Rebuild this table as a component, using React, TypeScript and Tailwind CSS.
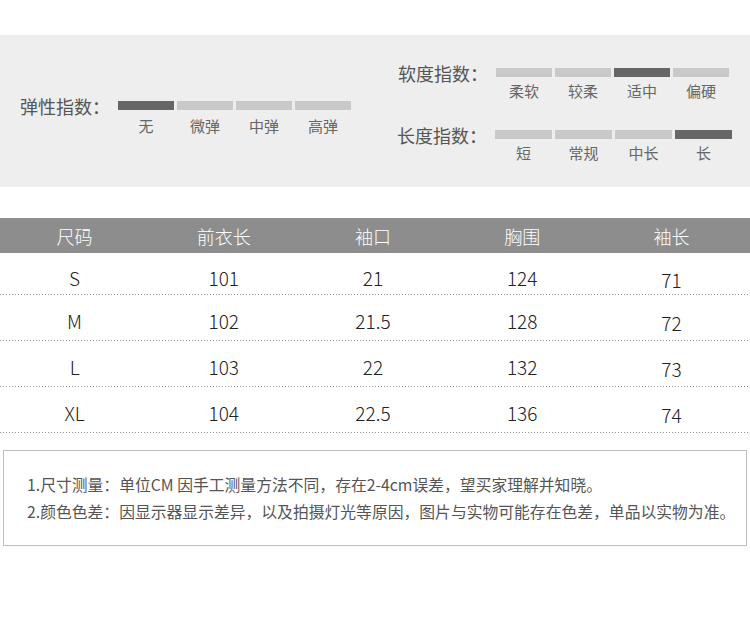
import React from "react";

const FONT = "font-['Noto_Sans_CJK_SC','Noto_Sans',sans-serif]";

interface IndexRowProps {
  title: string;
  labels: string[];
  active: number;
  barClass: string;
  labelGap: string;
}

const IndexRow: React.FC<IndexRowProps> = ({ title, labels, active, barClass, labelGap }) => (
  <div className="flex flex-col">
    <div className="flex h-[9px] items-center">
      <span className="w-[98px] shrink-0 text-[18px] leading-none text-[#555]">{title}</span>
      <div className="flex gap-[3px]">
        {labels.map((l, i) => (
          <div key={l} className={`${barClass} h-[9px] ${i === active ? "bg-[#666]" : "bg-[#c9c9c9]"}`} />
        ))}
      </div>
    </div>
    <div className={`ml-[98px] flex gap-[3px] ${labelGap}`}>
      {labels.map((l) => (
        <span key={l} className={`${barClass} text-center text-[15px] leading-[20px] text-[#666]`}>
          {l}
        </span>
      ))}
    </div>
  </div>
);

const header = ["尺码", "前衣长", "袖口", "胸围", "袖长"];
const rows = [
  ["S", "101", "21", "124", "71"],
  ["M", "102", "21.5", "128", "72"],
  ["L", "103", "22", "132", "73"],
  ["XL", "104", "22.5", "136", "74"],
];

const Dots = () => (
  <div className="h-px w-full bg-[linear-gradient(to_right,#8f8f8f_34%,transparent_34%)] bg-[length:3px_1px]" />
);

export default function App() {
  return (
    <div className={`${FONT} h-[622px] w-[750px] overflow-hidden bg-white`}>
      {/* Index panel */}
      <div className="mt-[35px] flex h-[152px] bg-[#eeeeee]">
        <div className="pl-[20px] pt-[66px]">
          <IndexRow
            title="弹性指数："
            labels={["无", "微弹", "中弹", "高弹"]}
            active={0}
            barClass="w-[56px]"
            labelGap="mt-[6px]"
          />
        </div>
        <div className="ml-[47px] flex flex-col gap-[29px] pt-[33px]">
          <IndexRow
            title="软度指数："
            labels={["柔软", "较柔", "适中", "偏硬"]}
            active={2}
            barClass="w-[56px]"
            labelGap="mt-[4px]"
          />
          <div className="-ml-px">
            <IndexRow
              title="长度指数："
              labels={["短", "常规", "中长", "长"]}
              active={3}
              barClass="w-[57px]"
              labelGap="mt-[4px]"
            />
          </div>
        </div>
      </div>

      {/* Size table */}
      <div className="mt-[31px]">
        <div className="grid h-[35px] grid-cols-5 items-center bg-[#8d8d8d] pr-[4px]">
          {header.map((h) => (
            <span key={h} className="text-center text-[18px] leading-none font-light text-white">
              {h}
            </span>
          ))}
        </div>
        {rows.map((r, i) => (
          <div key={r[0]}>
            <div className={`grid grid-cols-5 pr-[4px] ${i === 0 ? "h-[41px] pt-[15px]" : "h-[45px] pt-[16px]"}`}>
              {r.map((c, j) => (
                <span
                  key={j}
                  className={`text-center text-[19px] leading-[20px] font-light text-[#222] ${j === 4 ? "mt-[2px]" : ""}`}
                >
                  {c}
                </span>
              ))}
            </div>
            <Dots />
          </div>
        ))}
      </div>

      {/* Notes */}
      <div className="mx-[3px] mt-[17px] flex h-[96px] flex-col justify-center gap-[7px] border border-[#bdbdbd] pl-[23px] text-[15.8px] leading-[20px] text-[#555]">
        <p>1.尺寸测量：单位CM 因手工测量方法不同，存在2-4cm误差，望买家理解并知晓。</p>
        <p>2.颜色色差：因显示器显示差异，以及拍摄灯光等原因，图片与实物可能存在色差，单品以实物为准。</p>
      </div>
    </div>
  );
}
